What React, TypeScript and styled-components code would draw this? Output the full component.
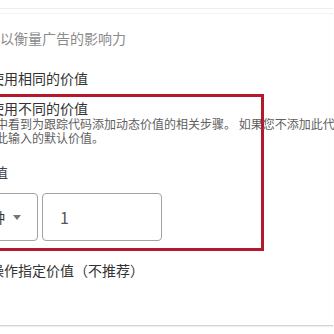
import React from 'react'
import styled, { createGlobalStyle } from 'styled-components'

const GlobalStyle = createGlobalStyle`
  html, body {
    margin: 0;
    padding: 0;
    background: #ffffff;
  }
  body {
    font-family: "Noto Sans CJK SC", "Noto Sans", sans-serif;
  }
  #root {
    width: 334px;
    height: 334px;
    overflow: hidden;
  }
`

const PageStyled = styled.div`
  display: flex;
  flex-direction: column;
  gap: 4px;
`
const PrevCardEdge = styled.div`
  height: 8px;
  margin-left: -40px;
  width: 373px;
  border-bottom: 1px solid #ededed;
`
const CardStyled = styled.div`
  display: flex;
  flex-direction: column;
  margin-left: -40px;
  width: 373px;
  padding: 14px 0 45px;
  border-top: 1px solid #f3f3f3;
  border-bottom: 1px solid #d2d2d2;
  box-shadow: 0 1px 1px rgba(0, 0, 0, 0.06);
`
const Hint = styled.div`
  padding-left: 40px;
  font-size: 14px;
  line-height: 20px;
  color: #8a8a8a;
  white-space: nowrap;
`
const OptionLabel = styled.div<{ $top?: number }>`
  padding-left: 30px;
  margin-top: ${(p) => p.$top ?? 0}px;
  font-size: 14px;
  line-height: 20px;
  color: #333333;
  white-space: nowrap;
`
const HighlightBox = styled.div`
  display: flex;
  flex-direction: column;
  margin: 6px 0 0 8px;
  width: 296px;
  box-sizing: border-box;
  padding: 2px 0 7px 0;
  border: 3px solid #b5172b;
`
const BoxTitle = styled.div`
  padding-left: 19px;
  font-size: 14px;
  line-height: 18px;
  color: #333333;
  white-space: nowrap;
`
const Description = styled.div`
  padding-left: 25px;
  font-size: 12px;
  line-height: 14px;
  color: #5f5f5f;
  white-space: nowrap;
`
const FieldLabel = styled.div`
  margin: 17px 0 0 9px;
  font-size: 14px;
  line-height: 20px;
  color: #444444;
  white-space: nowrap;
`
const FieldRow = styled.div`
  display: flex;
  gap: 4px;
  margin: 11px 0 0 4px;
`
const SelectBox = styled.div`
  display: flex;
  align-items: center;
  justify-content: flex-end;
  gap: 8px;
  width: 63px;
  height: 48px;
  box-sizing: border-box;
  padding-right: 16px;
  border: 1px solid #a3a3a3;
  border-radius: 4px;
  font-size: 14px;
  color: #333333;
  white-space: nowrap;
`
const Caret = styled.span`
  width: 0;
  height: 0;
  border-left: 4px solid transparent;
  border-right: 4px solid transparent;
  border-top: 5px solid #757575;
`
const ValueInput = styled.div`
  display: flex;
  align-items: center;
  width: 120px;
  height: 48px;
  box-sizing: border-box;
  padding-left: 17px;
  border: 1px solid #a3a3a3;
  border-radius: 4px;
  font-size: 16px;
  color: #555555;
`

const App: React.FC = () => {
  return (
    <>
      <GlobalStyle />
      <PageStyled>
        <PrevCardEdge />
        <CardStyled>
          <Hint>以衡量广告的影响力</Hint>
          <OptionLabel $top={20}>使用相同的价值</OptionLabel>
          <HighlightBox>
            <BoxTitle>使用不同的价值</BoxTitle>
            <Description>中看到为跟踪代码添加动态价值的相关步骤。 如果您不添加此代码</Description>
            <Description>此输入的默认价值。</Description>
            <FieldLabel>价值</FieldLabel>
            <FieldRow>
              <SelectBox>
                <span>币种</span>
                <Caret />
              </SelectBox>
              <ValueInput>1</ValueInput>
            </FieldRow>
          </HighlightBox>
          <OptionLabel $top={9}>操作指定价值（不推荐）</OptionLabel>
        </CardStyled>
      </PageStyled>
    </>
  )
}

export default App
